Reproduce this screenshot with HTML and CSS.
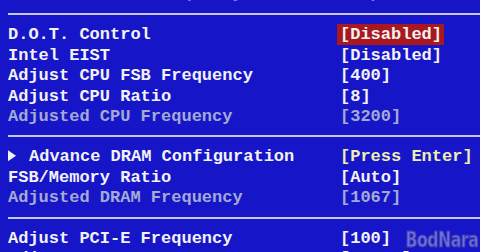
FILE: index.html
```html
<!DOCTYPE html>
<html lang="en">
<head>
    <meta charset="UTF-8">
    <meta name="viewport" content="width=device-width, initial-scale=1.0">
    <title>Cell Menu - BIOS</title>
    <link rel="stylesheet" href="styles.css">
</head>
<body>
    <div class="screen">
        <div class="row header">
            <span class="label">              Frequency</span>
            <span class="value">Help Item</span>
        </div>
        <div class="divider first"></div>

        <div class="row">
            <span class="label">D.O.T. Control</span>
            <span class="value"><span class="selected">[Disabled]</span></span>
        </div>
        <div class="row">
            <span class="label">Intel EIST</span>
            <span class="value">[Disabled]</span>
        </div>
        <div class="row">
            <span class="label">Adjust CPU FSB Frequency</span>
            <span class="value">[400]</span>
        </div>
        <div class="row">
            <span class="label">Adjust CPU Ratio</span>
            <span class="value">[8]</span>
        </div>
        <div class="row dim">
            <span class="label">Adjusted CPU Frequency</span>
            <span class="value">[3200]</span>
        </div>
        <div class="divider"></div>

        <div class="row">
            <span class="label"><span class="arrow"></span>Advance DRAM Configuration</span>
            <span class="value enter">[Press Enter]</span>
        </div>
        <div class="row">
            <span class="label">FSB/Memory Ratio</span>
            <span class="value">[Auto]</span>
        </div>
        <div class="row dim">
            <span class="label">Adjusted DRAM Frequency</span>
            <span class="value">[1067]</span>
        </div>
        <div class="divider"></div>

        <div class="row">
            <span class="label">Adjust PCI-E Frequency</span>
            <span class="value">[100]</span>
        </div>
        <div class="row">
            <span class="label">Adjust PCI Frequency</span>
            <span class="value">[33.33]</span>
        </div>
    </div>

    <div class="watermark">BodNara</div>
</body>
</html>
```

FILE: styles.css
```css
* {
    margin: 0;
    padding: 0;
    box-sizing: border-box;
}

body {
    font-family: "Liberation Mono", "DejaVu Sans Mono", monospace;
    font-weight: bold;
    font-size: 17px;
    color: #f2f2f4;
    background-color: #1616c8;
    width: 480px;
    height: 252px;
    overflow: hidden;
    position: relative;
}

.screen {
    padding-left: 8px;
}

.row {
    display: grid;
    grid-template-columns: 332px auto;
    line-height: 20.4px;
    height: 20.4px;
    white-space: pre;
}

.header {
    margin-top: -16px;
    color: #7e82d4;
}

.dim {
    color: #a4aad6;
}

.enter {
    color: #eeeeb0;
}

.selected {
    background-color: #a8181c;
    padding: 1px 2px 1px 3px;
    margin-left: -3px;
}

.arrow {
    display: inline-block;
    width: 21px;
    height: 11px;
}

.arrow::before {
    content: "";
    display: block;
    width: 8px;
    height: 11px;
    background-color: #f2f2f4;
    clip-path: polygon(0 0, 100% 50%, 0 100%);
}

.divider {
    height: 2px;
    background-color: #c4c8f0;
    margin: 8px 0 10px 0;
}

.divider.first {
    margin-top: 9px;
}

.watermark {
    position: absolute;
    right: 2px;
    bottom: 1px;
    font-family: "DejaVu Sans", sans-serif;
    font-weight: bold;
    font-size: 21px;
    line-height: 22px;
    letter-spacing: -0.5px;
    color: #7070d8;
    -webkit-text-stroke: 1px #3c3cae;
    transform: scaleX(0.74);
    transform-origin: right bottom;
}
```
